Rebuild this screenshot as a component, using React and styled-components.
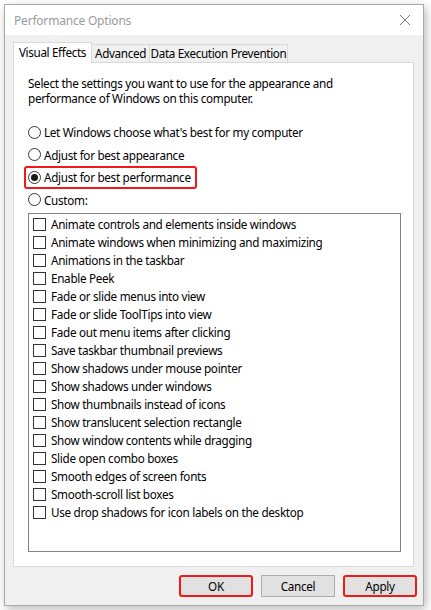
import React from "react";
import styled, { createGlobalStyle } from "styled-components";

const Global = createGlobalStyle`
  html, body { margin: 0; padding: 0; background: #ffffff; }
  body {
    font-family: "Noto Sans", "Open Sans", "DejaVu Sans", sans-serif;
    font-size: 11.7px;
    letter-spacing: -0.3px;
    color: #000;
  }
  * { box-sizing: border-box; }
`;

const Screen = styled.div`
  width: 431px;
  height: 610px;
  padding: 4px 0 0 4px;
  background: #ffffff;
  overflow: hidden;
`;

const Window = styled.div`
  width: 420px;
  height: 602px;
  border: 1px solid #a9a9a9;
  background: #f0f0f0;
  box-shadow: 2px 3px 9px rgba(0, 0, 0, 0.28);
  display: flex;
  flex-direction: column;
`;

const TitleBar = styled.div`
  height: 30px;
  background: #ffffff;
  display: flex;
  align-items: center;
  justify-content: space-between;
  padding: 0 9px 0 9px;
`;

const Title = styled.div`
  color: #9b9b9b;
  font-size: 12px;
  letter-spacing: -0.2px;
`;

const CloseIcon = styled.svg`
  width: 12px;
  height: 12px;
  margin-right: 3px;
`;

const Body = styled.div`
  flex: 1;
  display: flex;
  flex-direction: column;
  padding: 7px 9px 8px 8px;
`;

const TabRow = styled.div`
  display: flex;
  align-items: flex-end;
  height: 20px;
`;

const Tab = styled.div`
  position: relative;
  width: ${(p) => p.$w}px;
  height: ${(p) => (p.$active ? 21 : 18)}px;
  margin-left: ${(p) => (p.$first ? 0 : -1)}px;
  margin-bottom: ${(p) => (p.$active ? -1 : 0)}px;
  z-index: ${(p) => (p.$active ? 2 : 1)};
  background: ${(p) => (p.$active ? "#ffffff" : "#f0f0f0")};
  border: 1px solid #d9d9d9;
  border-bottom: none;
  display: flex;
  align-items: ${(p) => (p.$active ? "flex-start" : "center")};
  justify-content: center;
  padding-top: ${(p) => (p.$active ? 2 : 0)}px;
  line-height: 15px;
  white-space: nowrap;
  letter-spacing: -0.35px;
`;

const Panel = styled.div`
  height: 505px;
  background: #ffffff;
  border: 1px solid #d9d9d9;
  display: flex;
  flex-direction: column;
  padding: 13px 13px 0 14px;
`;

const Description = styled.p`
  margin: 0;
  line-height: 15px;
`;

const RadioGroup = styled.div`
  margin-top: 15px;
  display: flex;
  flex-direction: column;
`;

const RadioRow = styled.div`
  height: 22.5px;
  display: flex;
  align-items: center;
`;

const RadioLabel = styled.label`
  position: relative;
  display: inline-flex;
  align-items: center;
  height: 100%;
  gap: 3px;
  white-space: nowrap;
  &::after {
    content: "";
    display: ${(p) => (p.$highlight ? "block" : "none")};
    position: absolute;
    top: 0;
    bottom: 0;
    left: -4px;
    right: -6px;
    border: 2px solid #f01a1a;
    border-radius: 3px;
  }
`;

const RadioCircle = styled.span`
  width: 13px;
  height: 13px;
  border-radius: 50%;
  border: 1px solid #333333;
  background: #ffffff;
  display: flex;
  align-items: center;
  justify-content: center;
  flex-shrink: 0;
  &::before {
    content: "";
    display: ${(p) => (p.$checked ? "block" : "none")};
    width: 7px;
    height: 7px;
    border-radius: 50%;
    background: #1a1a1a;
  }
`;

const ListBox = styled.div`
  margin-top: 2px;
  width: 373px;
  height: 339px;
  border: 1px solid #828282;
  padding: 1px 0 0 4px;
  display: flex;
  flex-direction: column;
`;

const CheckRow = styled.div`
  height: 18px;
  display: flex;
  align-items: center;
  gap: 5px;
  white-space: nowrap;
`;

const CheckBox = styled.span`
  width: 13px;
  height: 13px;
  border: 1px solid #333333;
  background: #ffffff;
  flex-shrink: 0;
`;

const Footer = styled.div`
  margin-top: 8px;
  margin-right: -3px;
  display: flex;
  justify-content: flex-end;
  gap: 8px;
`;

const Button = styled.button`
  width: 74px;
  height: 22px;
  background: #e1e1e1;
  border: ${(p) => (p.$highlight ? "2px solid #f01a1a" : "1px solid #adadad")};
  border-radius: ${(p) => (p.$highlight ? "3px" : "0")};
  font-family: "Noto Sans", "Open Sans", sans-serif;
  font-size: 11.7px;
  letter-spacing: -0.3px;
  color: #000;
  padding: 0;
  line-height: 16px;
`;

const options = [
  "Animate controls and elements inside windows",
  "Animate windows when minimizing and maximizing",
  "Animations in the taskbar",
  "Enable Peek",
  "Fade or slide menus into view",
  "Fade or slide ToolTips into view",
  "Fade out menu items after clicking",
  "Save taskbar thumbnail previews",
  "Show shadows under mouse pointer",
  "Show shadows under windows",
  "Show thumbnails instead of icons",
  "Show translucent selection rectangle",
  "Show window contents while dragging",
  "Slide open combo boxes",
  "Smooth edges of screen fonts",
  "Smooth-scroll list boxes",
  "Use drop shadows for icon labels on the desktop",
];

const radios = [
  { label: "Let Windows choose what's best for my computer" },
  { label: "Adjust for best appearance" },
  { label: "Adjust for best performance", checked: true, highlight: true },
  { label: "Custom:" },
];

export default function App() {
  return (
    <>
      <Global />
      <Screen>
        <Window>
          <TitleBar>
            <Title>Performance Options</Title>
            <CloseIcon viewBox="0 0 12 12">
              <path d="M1 1 L11 11 M11 1 L1 11" stroke="#7a7a7a" strokeWidth="1" fill="none" />
            </CloseIcon>
          </TitleBar>
          <Body>
            <TabRow>
              <Tab $active $first $w={79}>Visual Effects</Tab>
              <Tab $w={59}>Advanced</Tab>
              <Tab $w={139}>Data Execution Prevention</Tab>
            </TabRow>
            <Panel>
              <Description>
                Select the settings you want to use for the appearance and
                <br />
                performance of Windows on this computer.
              </Description>
              <RadioGroup>
                {radios.map((r) => (
                  <RadioRow key={r.label}>
                    <RadioLabel $highlight={r.highlight}>
                      <RadioCircle $checked={r.checked} />
                      {r.label}
                    </RadioLabel>
                  </RadioRow>
                ))}
              </RadioGroup>
              <ListBox>
                {options.map((o) => (
                  <CheckRow key={o}>
                    <CheckBox />
                    {o}
                  </CheckRow>
                ))}
              </ListBox>
            </Panel>
            <Footer>
              <Button $highlight>OK</Button>
              <Button>Cancel</Button>
              <Button $highlight>Apply</Button>
            </Footer>
          </Body>
        </Window>
      </Screen>
    </>
  );
}
